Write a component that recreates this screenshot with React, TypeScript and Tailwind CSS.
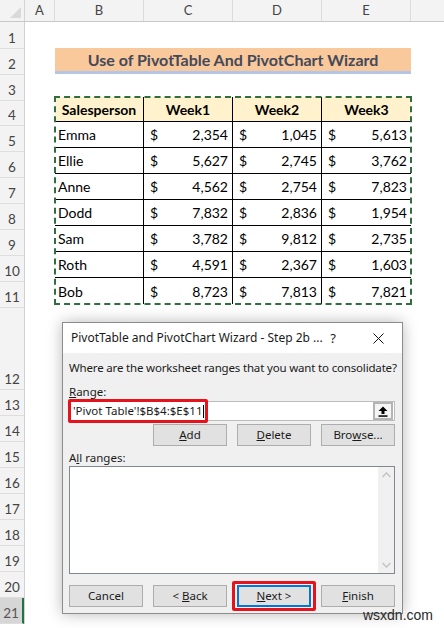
import React from 'react';

type Sale = [string, number, number, number];

const sales: Sale[] = [
  ['Emma', 2354, 1045, 5613],
  ['Ellie', 5627, 2745, 3762],
  ['Anne', 4562, 2754, 7823],
  ['Dodd', 7832, 2836, 1954],
  ['Sam', 3782, 9812, 2735],
  ['Roth', 4591, 2367, 1603],
  ['Bob', 8723, 7813, 7821],
];

// heights of rows 1..21 in the grid
const rowHeights = [27, 26, 26, 25, 26, 26, 26, 26, 26, 26, 26, 82, 26, 26, 26, 26, 26, 26, 26, 26, 26];

const columns = [
  { label: 'A', w: 'w-[30px]' },
  { label: 'B', w: 'w-[89px]' },
  { label: 'C', w: 'w-[89px]' },
  { label: 'D', w: 'w-[89px]' },
  { label: 'E', w: 'w-[89px]' },
];

const fmt = (n: number) => n.toLocaleString('en-US');

const Money: React.FC<{ value: number; last?: boolean }> = ({ value, last }) => (
  <div className={`flex items-end justify-between pl-[6px] pr-[4px] pb-[2px] ${last ? '' : 'border-r border-black'}`}>
    <span>$</span>
    <span>{fmt(value)}</span>
  </div>
);

const Button: React.FC<{ children: React.ReactNode; focused?: boolean }> = ({ children, focused }) => (
  <div
    className={`w-[74px] h-[22px] flex items-center justify-center bg-[#e1e1e1] text-[#1a1a1a] ${
      focused ? 'border-2 border-[#0078d7]' : 'border border-[#adadad]'
    }`}
  >
    {children}
  </div>
);

const Collapse = () => (
  <div className="w-[20px] h-[18px] mr-[1px] flex items-center justify-center bg-[#f5f5f5] border-2 border-[#b4b4b4]">
    <svg width="10" height="11" viewBox="0 0 10 11">
      <path d="M5 0.5 L9.5 5 L6.5 5 L6.5 8 L3.5 8 L3.5 5 L0.5 5 Z" fill="#000" />
      <rect x="0.5" y="9.3" width="9" height="1.5" fill="#000" />
    </svg>
  </div>
);

const Wizard = () => (
  <div className="absolute left-[62px] top-[322px] w-[341px] h-[292px] bg-[#f0f0f0] border border-[#8c8c8c] shadow-[0_0_14px_rgba(0,0,0,0.28)] font-['Noto_Sans',sans-serif] text-[11.5px] text-[#1a1a1a] leading-4">
    {/* title bar */}
    <div className="h-[30px] bg-white flex items-center pl-[8px]">
      <span className="text-[12px]">PivotTable and PivotChart Wizard - Step 2b ...</span>
      <span className="ml-auto text-[13px] mr-[37px]">?</span>
      <svg className="mr-[18px]" width="11" height="11" viewBox="0 0 11 11">
        <path d="M0.5 0.5 L10.5 10.5 M10.5 0.5 L0.5 10.5" stroke="#111" strokeWidth="1" />
      </svg>
    </div>

    <div className="px-[6px]">
      <p className="mt-[7px] whitespace-nowrap tracking-[-0.17px]">
        Where are the worksheet ranges that you want to consolidate?
      </p>

      <p className="mt-[8px]">
        <span className="underline">R</span>ange:
      </p>

      {/* range box */}
      <div className="relative mt-[1px] h-[20px] w-[326px] bg-white border border-[#bcbcbc] flex items-center">
        <span className="pl-[3px]">'Pivot Table'!$B$4:$E$11</span>
        <span className="w-px h-[13px] bg-black ml-[1px]" />
        <div className="ml-auto">
          <Collapse />
        </div>
        <div className="absolute -left-[2px] -top-[3px] w-[140px] h-[24px] border-[3px] border-[#e5131c] rounded-[2px]" />
      </div>

      <div className="mt-[3px] w-[326px] flex justify-end gap-[10px]">
        <Button>
          <span className="underline">A</span>dd
        </Button>
        <Button>
          <span className="underline">D</span>elete
        </Button>
        <Button>
          Bro<span className="underline">w</span>se...
        </Button>
      </div>

      <p className="mt-[4px]">
        A<span className="underline">l</span>l ranges:
      </p>

      {/* list of added ranges */}
      <div className="h-[108px] w-[326px] bg-white border border-[#828790] flex justify-end">
        <div className="w-[16px] bg-[#f0f0f0] flex flex-col items-center justify-between py-[5px]">
          <svg width="9" height="6" viewBox="0 0 9 6">
            <path d="M0.5 5 L4.5 1 L8.5 5" stroke="#c2c2c2" strokeWidth="1.3" fill="none" />
          </svg>
          <svg width="9" height="6" viewBox="0 0 9 6">
            <path d="M0.5 1 L4.5 5 L8.5 1" stroke="#c2c2c2" strokeWidth="1.3" fill="none" />
          </svg>
        </div>
      </div>

      <div className="mt-[11px] w-[326px] flex justify-between">
        <Button>Cancel</Button>
        <Button>
          &lt; <span className="underline ml-[3px]">B</span>ack
        </Button>
        <div className="relative">
          <Button focused>
            <span className="underline">N</span>ext &gt;
          </Button>
          <div className="absolute -left-[5px] -top-[4px] w-[84px] h-[30px] border-[3px] border-[#e5131c] rounded-[2px]" />
        </div>
        <Button>
          <span className="underline">F</span>inish
        </Button>
      </div>
    </div>
  </div>
);

export default function App() {
  return (
    <div className="relative w-[444px] h-[628px] overflow-hidden bg-white font-['Lato',sans-serif] text-[14px] text-black">
      {/* column headings */}
      <div className="flex h-[22px] bg-[#f3f3f3] border-b border-[#c8c8c8] text-[13px] text-[#444]">
        <div className="w-[25px] border-r border-[#d4d4d4] flex items-end justify-end p-[3px]">
          <svg width="11" height="11" viewBox="0 0 11 11">
            <path d="M11 0 L11 11 L0 11 Z" fill="#d9d9d9" />
          </svg>
        </div>
        {columns.map((c) => (
          <div key={c.label} className={`${c.w} border-r border-[#dcdcdc] flex items-center justify-center`}>
            {c.label}
          </div>
        ))}
        <div className="flex-1" />
      </div>

      <div className="flex">
        {/* row headings */}
        <div className="w-[25px] bg-[#f3f3f3] border-r border-[#d0d0d0] text-[13.5px] text-[#444] leading-4">
          {rowHeights.map((h, i) => {
            const selected = i === 20;
            return (
              <div
                key={i}
                style={{ height: h }}
                className={`flex items-end justify-center pb-[2px] border-b border-[#dedede] ${
                  selected ? 'bg-[#d6d6d6] text-[#555] border-r-2 border-r-[#217346]' : ''
                }`}
              >
                {i + 1}
              </div>
            );
          })}
        </div>

        {/* worksheet body */}
        <div className="flex-1">
          <div className="h-[26px]" />
          <div className="h-[27px] flex">
            <div className="w-[30px]" />
            <div className="w-[356px] h-[26px] bg-[#f9c89b] border-b-[3px] border-[#b4c6e7] flex items-center justify-center font-bold text-[16px] text-[#44495a]">
              Use of PivotTable And PivotChart Wizard
            </div>
          </div>
          <div className="h-[22px]" />

          {/* sales table */}
          <div className="ml-[30px] w-[356px] relative">
            <div className="grid grid-cols-[89px_89px_89px_89px] h-[25px] bg-[#fff2cc] border-b border-black font-bold">
              <div className="flex items-center justify-center border-r border-black">Salesperson</div>
              <div className="flex items-center justify-center border-r border-black">Week1</div>
              <div className="flex items-center justify-center border-r border-black">Week2</div>
              <div className="flex items-center justify-center">Week3</div>
            </div>
            {sales.map(([name, w1, w2, w3], i) => (
              <div
                key={name}
                className={`grid grid-cols-[89px_89px_89px_89px] h-[26px] ${i < sales.length - 1 ? 'border-b border-black' : ''}`}
              >
                <div className="flex items-end pl-[3px] pb-[2px] border-r border-black">{name}</div>
                <Money value={w1} />
                <Money value={w2} />
                <Money value={w3} last />
              </div>
            ))}
            {/* copy marquee */}
            <div className="absolute -inset-[1px] border-2 border-dashed border-[#2f6e3f] pointer-events-none" />
          </div>
        </div>
      </div>

      <Wizard />

      <div className="absolute right-[11px] bottom-[2px] font-['Liberation_Sans',sans-serif] text-[14px] text-[#2a2a2a]">
        wsxdn.com
      </div>
    </div>
  );
}
